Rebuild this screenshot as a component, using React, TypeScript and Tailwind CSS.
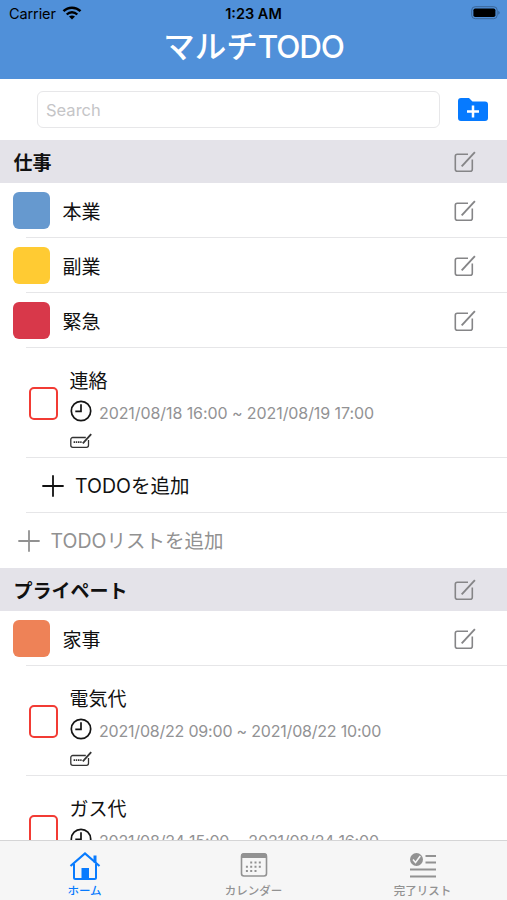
// src/App.tsx

import type { ReactNode } from "react";

type Todo = {
  title: string;
  period: string;
  spacing: string;
};

const workLists = [
  { name: "本業", color: "bg-[#6699cf]" },
  { name: "副業", color: "bg-[#ffcb33]" },
  { name: "緊急", color: "bg-[#d8384a]" },
];

const workTodos: Todo[] = [
  {
    title: "連絡",
    period: "2021/08/18 16:00 ~ 2021/08/19 17:00",
    spacing: "tracking-[-0.08px]",
  },
];

const privateTodos: Todo[] = [
  {
    title: "電気代",
    period: "2021/08/22 09:00 ~ 2021/08/22 10:00",
    spacing: "tracking-[-0.2px]",
  },
  {
    title: "ガス代",
    period: "2021/08/24 15:00 ~ 2021/08/24 16:00",
    spacing: "tracking-[-0.17px]",
  },
];

const EditIcon = () => (
  <svg
    viewBox="0 0 24 24"
    className="size-6 shrink-0"
    fill="none"
    stroke="#858587"
    strokeWidth="1.6"
  >
    <path d="M15 4.2H4.3a2 2 0 0 0-2 2v13a2 2 0 0 0 2 2h13a2 2 0 0 0 2-2V9.5" />
    <path d="M8.7 16.3L21.9 2.2" strokeWidth="1.9" />
  </svg>
);

const ClockIcon = () => (
  <svg viewBox="0 0 24 24" className="size-6" fill="none" stroke="#151515">
    <circle cx="12" cy="12" r="9.7" strokeWidth="1.7" />
    <path d="M12 5.2V12.3H6.3" strokeWidth="1.7" />
  </svg>
);

const MemoIcon = () => (
  <svg
    viewBox="0 0 24 18"
    className="h-[18px] w-6"
    fill="none"
    stroke="#333"
    strokeWidth="1.3"
  >
    <path d="M16.8 5.5H3.8a2 2 0 0 0-2 2v5.8a2 2 0 0 0 2 2h13.7a2 2 0 0 0 2-2V8" />
    <path d="M13.8 11.4L22.2 2.2" strokeWidth="1.8" />
    <path d="M4.6 10.2h8" strokeWidth="1.7" strokeDasharray="1.5 .7" />
  </svg>
);

const PlusIcon = () => (
  <svg
    viewBox="0 0 24 24"
    className="size-6 shrink-0"
    fill="none"
    stroke="currentColor"
    strokeWidth="1.8"
    strokeLinecap="round"
  >
    <path d="M12 2v20M2 12h20" />
  </svg>
);

const SectionHeader = ({ title }: { title: string }) => (
  <div className="flex h-[43px] shrink-0 items-center justify-between bg-[#e4e3e9] pr-[30px] pl-[13.5px]">
    <h2 className="pt-1 text-[19px] leading-6 font-bold">{title}</h2>
    <EditIcon />
  </div>
);

const Divider = () => (
  <div className="absolute right-0 bottom-0 left-[26px] h-px bg-[#e6e6e8]" />
);

const ListRow = ({ name, color }: { name: string; color: string }) => (
  <div className="relative flex h-[55px] shrink-0 items-center pr-[30px] pl-[13px]">
    <div className={`size-[37px] rounded-[6px] ${color}`} />
    <span className="ml-[12.5px] flex-1 pt-1 text-[19px] leading-6">{name}</span>
    <EditIcon />
    <Divider />
  </div>
);

const TodoRow = ({ title, period, spacing }: Todo) => (
  <div className="relative flex h-[110px] shrink-0 pl-[28.5px]">
    <div className="mt-[38.5px] h-[33px] w-[29.5px] rounded-[5px] border-[2.5px] border-[#f23b34]" />
    <div className="ml-[10.5px] pt-[22px]">
      <div className="ml-px text-[19px] leading-6">{title}</div>
      <div className="mt-[5px] flex items-center">
        <ClockIcon />
        <span
          className={`mt-1 ml-[6.5px] text-[16px] leading-5 whitespace-pre text-[#929294] ${spacing}`}
        >
          {period}
        </span>
      </div>
      <div className="mt-[9px]">
        <MemoIcon />
      </div>
    </div>
    <Divider />
  </div>
);

const Tab = ({
  label,
  active,
  children,
}: {
  label: string;
  active?: boolean;
  children: ReactNode;
}) => (
  <div
    className={`flex flex-1 flex-col items-center pt-[9px] ${active ? "text-[#087bfe]" : "text-[#929292]"}`}
  >
    {children}
    <span className="mt-px text-[11.5px] leading-4 font-medium">{label}</span>
  </div>
);

const App = () => {
  return (
    <div className="flex h-[900px] w-[507px] flex-col overflow-hidden bg-white font-['Inter','Noto_Sans_CJK_JP',sans-serif] text-[#111]">
      <header className="h-[79px] shrink-0 bg-[#5090d9]">
        {/* Status bar */}
        <div className="grid h-7 grid-cols-3 items-center pr-[6px] pl-[9px] text-black">
          <div className="flex items-center gap-[6px] text-[14.5px] leading-5 tracking-[-0.1px]">
            Carrier
            <svg viewBox="0 0 20 14" className="-mt-0.5 h-[14px] w-5" fill="none">
              <path d="M1.5 5.2C6.3.5 13.7.5 18.5 5.2" stroke="#000" strokeWidth="2.5" />
              <path d="M4.7 8.5C7.7 5.5 12.3 5.5 15.3 8.5" stroke="#000" strokeWidth="2.3" />
              <path d="M10 13.5L7 10.5Q10 8.3 13 10.5Z" fill="#000" />
            </svg>
          </div>
          <div className="pr-[3px] text-center text-[14.5px] leading-5 font-semibold">1:23 AM</div>
          <svg viewBox="0 0 30 14" className="-mt-0.5 h-[14px] w-[30px] justify-self-end" fill="none">
            <rect x=".7" y=".7" width="25.5" height="12" rx="3.5" stroke="#3a6698" />
            <rect x="2.4" y="2.4" width="22" height="8.7" rx="1.8" fill="#000" />
            <path d="M27.5 4.7q2 2 0 4z" fill="#284f7c" />
          </svg>
        </div>
        <h1 className="text-center text-[31.5px] leading-[38px] font-medium text-white">
          マルチ<span className="tracking-[-1.2px]">TODO</span>
        </h1>
      </header>

      {/* Search */}
      <div className="flex h-[61px] shrink-0 items-center pr-[17px] pl-[37px]">
        <div className="flex h-[37px] w-[403px] items-center rounded-[6px] border border-[#e7e7e9] pt-px pl-2 text-[16.5px] text-[#c5c5c7]">
          Search
        </div>
        <svg viewBox="0 0 32 26" className="ml-[17px] h-[26px] w-8">
          <path
            d="M4 1h8l3.500 3.500H28q3 0 3 3V21q0 3-3 3H4q-3 0-3-3V4q0-3 3-3z"
            fill="#067aff"
          />
          <path d="M16 8.5v12M10 14.5h12" stroke="#fff" strokeWidth="2.5" />
        </svg>
      </div>

      <main className="flex min-h-0 flex-1 flex-col overflow-hidden">
        <SectionHeader title="仕事" />
        {workLists.map((list) => (
          <ListRow key={list.name} {...list} />
        ))}
        {workTodos.map((todo) => (
          <TodoRow key={todo.title} {...todo} />
        ))}
        <div className="relative flex h-[55px] shrink-0 items-center pl-[41px] text-[19.5px]">
          <PlusIcon />
          <span className="ml-[10px] pt-px leading-6">TODOを追加</span>
          <Divider />
        </div>
        <div className="flex h-[55px] shrink-0 items-center pl-[17px] text-[19.5px] text-[#919191]">
          <PlusIcon />
          <span className="ml-[9.5px] pt-px leading-6">TODOリストを追加</span>
        </div>

        <SectionHeader title="プライペート" />
        <ListRow name="家事" color="bg-[#ee8257]" />
        {privateTodos.map((todo) => (
          <TodoRow key={todo.title} {...todo} />
        ))}
      </main>

      {/* Tab bar */}
      <nav className="flex h-[60px] shrink-0 border-t border-[#d5d5d6] bg-[#f6f6f6]">
        <Tab label="ホーム" active>
          <svg viewBox="0 0 32 32" className="size-8" fill="none" stroke="currentColor">
            <path d="M1.5 16L16 3.5L30.5 16" strokeWidth="2.2" />
            <path d="M5 14v13.500q0 1.500 1.500 1.500h19q1.500 0 1.500-1.500V14" strokeWidth="2" />
            <path d="M26 5.5v7" strokeWidth="3" />
            <path d="M12.500 18h7.500V29h-7.500z" fill="currentColor" stroke="none" />
          </svg>
        </Tab>
        <Tab label="カレンダー">
          <svg viewBox="0 0 32 32" className="size-8" fill="none" stroke="currentColor">
            <rect x="3.5" y="4" width="25" height="22" rx="2.5" strokeWidth="1.6" />
            <path d="M3 8V5.500Q3 3 6 3h20q3 0 3 2.500V8z" fill="currentColor" stroke="none" />
            <path d="M12.200 12.500H24M7.900 16.800H24M7.900 21H19.600" strokeWidth="2" strokeDasharray="2 2.3" />
          </svg>
        </Tab>
        <Tab label="完了リスト">
          <svg viewBox="0 0 32 32" className="size-8" fill="none" stroke="currentColor">
            <circle cx="9.5" cy="9.5" r="6.5" fill="currentColor" stroke="none" />
            <path d="M6 9.500l2.500 3L13.300 6" stroke="#f6f6f6" strokeWidth="1.5" />
            <path d="M18.500 6H29M18.500 12.500H29M3 19.500h26M3 26.500h26" strokeWidth="1.9" />
          </svg>
        </Tab>
      </nav>
    </div>
  );
};

export default App;
